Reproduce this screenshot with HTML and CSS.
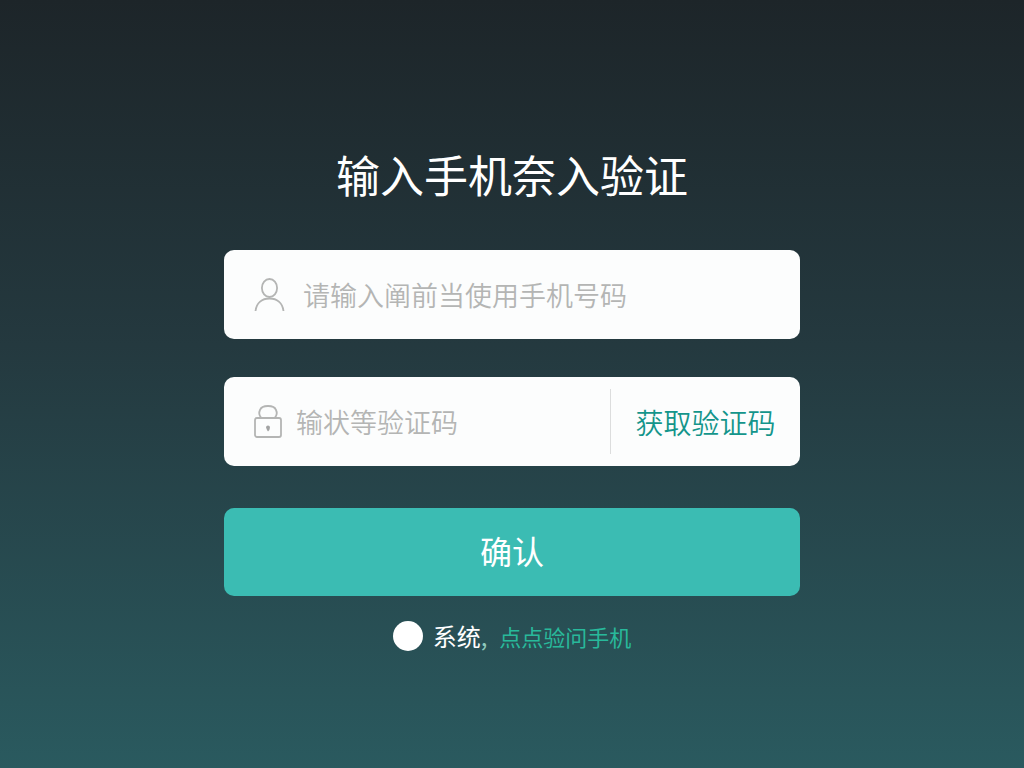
FILE: index.html
```
<!DOCTYPE html>
<html lang="zh-CN">
<head>
  <meta charset="UTF-8">
  <meta name="viewport" content="width=device-width, initial-scale=1.0">
  <title>手机验证</title>
  <link rel="stylesheet" href="styles.css">
</head>
<body>
  <form class="verify">
    <h1>输入手机奈入验证</h1>
    <div class="field">
      <label for="phone" aria-label="手机号码">
        <svg class="icon" width="32" height="36" viewBox="0 0 32 36">
          <ellipse cx="15.5" cy="11" rx="7.6" ry="9"/>
          <path d="M1.5 34C2.5 26 8 21.5 15.5 21.5S28.5 26 29.5 34"/>
        </svg>
      </label>
      <input type="tel" id="phone" placeholder="请输入阐前当使用手机号码">
    </div>
    <div class="field code">
      <label for="code" aria-label="验证码">
        <svg class="icon" width="28" height="36" viewBox="0 0 28 36">
          <rect x="1" y="14" width="26" height="19" rx="2"/>
          <path d="M7 13.500C5 11 5 8 6 6C7 3 9 2 14 2S21 3 22 6C23 8 23 11 21 13.500"/>
          <path class="keyhole" d="M12 23.500a2 2 0 1 1 4 0q0 2-2 4q-1-1-2-4z"/>
        </svg>
      </label>
      <input type="text" id="code" placeholder="输状等验证码">
      <button type="button" class="get-code">获取验证码</button>
    </div>
    <button type="submit" class="submit">确认</button>
    <div class="agree">
      <input type="checkbox" id="agree">
      <label for="agree">系统<span class="comma">,</span></label>
      <a href="#">点点验问手机</a>
    </div>
  </form>
</body>
</html>
```
FILE: styles.css
```
* {
  box-sizing: border-box;
}
body {
  margin: 0;
  min-height: 100vh;
  padding: 142px 24px 24px;
  background: linear-gradient(#1d2529, #24393f 45%, #2a5a5f);
  font-family: "Noto Sans CJK SC", sans-serif;
}
.verify {
  display: flex;
  flex-direction: column;
  max-width: 576px;
  margin: 0 auto;
}
h1 {
  margin: 0 0 44px;
  color: #fff;
  font-size: 44px;
  font-weight: 400;
  line-height: 64px;
  text-align: center;
}
input,
button {
  font-family: inherit;
  font-weight: 350;
}
.field {
  display: flex;
  align-items: center;
  height: 89px;
  padding-left: 30px;
  background: #fcfdfd;
  border-radius: 10px;
}
.field label {
  display: flex;
}
.field input {
  flex: 1;
  min-width: 0;
  height: 46px;
  margin-left: 17px;
  padding: 0;
  border: none;
  outline: none;
  background: none;
  color: #444;
  font-size: 27px;
}
.field input::placeholder {
  color: #b4b5b4;
  opacity: 1;
}
.code {
  margin: 38px 0 42px;
}
.code input {
  margin-left: 14px;
}
.icon {
  fill: none;
  stroke: #b4b5b4;
  stroke-width: 1.8;
}
.icon .keyhole {
  fill: #a2a3a3;
  stroke: none;
}
.get-code {
  width: 190px;
  height: 65px;
  padding: 0;
  border: none;
  border-left: 1px solid #dcdddd;
  background: none;
  color: #14958b;
  font-size: 28px;
  cursor: pointer;
}
.submit {
  height: 88px;
  padding: 0 0 4px;
  border: none;
  border-radius: 10px;
  background: #3bbcb3;
  color: #fff;
  font-size: 32px;
  font-weight: 400;
  cursor: pointer;
}
.agree {
  display: flex;
  justify-content: center;
  align-items: center;
  margin-top: 24px;
  color: #fff;
  font-size: 24px;
  line-height: 32px;
}
.agree input {
  appearance: none;
  width: 30px;
  height: 30px;
  margin: 0 10px 0 0;
  border-radius: 50%;
  background: #fff;
}
.agree input:checked {
  border: 8px solid #fff;
  background: #3bbcb3;
}
.agree .comma {
  color: #8fc9bd;
}
.agree a {
  margin-left: 12px;
  color: #28b99b;
  font-size: 22px;
  text-decoration: none;
}
```
